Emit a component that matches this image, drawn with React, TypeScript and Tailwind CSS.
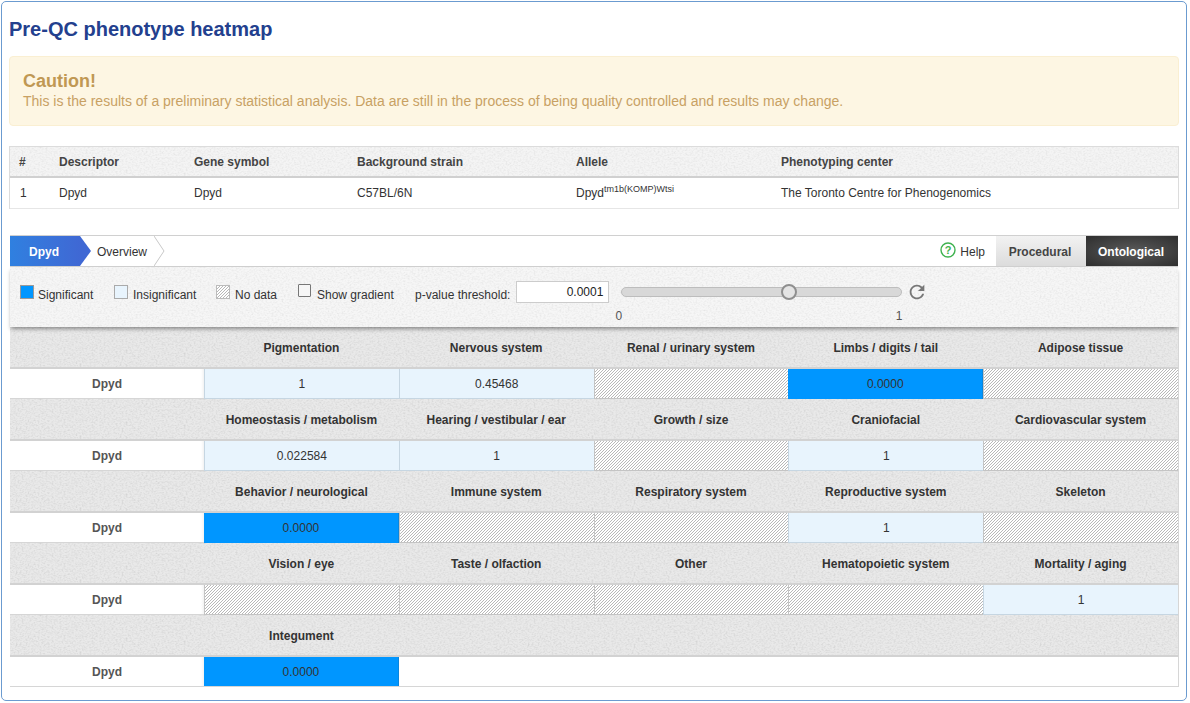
import React from "react";
import { MdRefresh } from "react-icons/md";

const Noise = ({ id, strength = 0.04 }: { id: string; strength?: number }) => (
  <svg className="absolute inset-0 w-full h-full pointer-events-none" aria-hidden="true">
    <filter id={id} x="0" y="0" width="100%" height="100%">
      <feTurbulence type="fractalNoise" baseFrequency="0.5 0.65" numOctaves={2} seed={4} />
      <feColorMatrix type="matrix" values={`0 0 0 0 0  0 0 0 0 0  0 0 0 0 0  ${strength * 3} ${strength * 3} 0 0 ${-strength * 2.6}`} />
    </filter>
    <rect width="100%" height="100%" filter={`url(#${id})`} />
  </svg>
);

const Hatch = ({ id }: { id: string }) => (
  <svg className="absolute inset-0 w-full h-full" aria-hidden="true" shapeRendering="crispEdges">
    <pattern id={id} width="3" height="3" patternUnits="userSpaceOnUse">
      <rect width="3" height="3" fill="#ffffff" />
      <rect x="2" y="0" width="1" height="1" fill="#b8b8b8" />
      <rect x="1" y="1" width="1" height="1" fill="#b8b8b8" />
      <rect x="0" y="2" width="1" height="1" fill="#b8b8b8" />
    </pattern>
    <rect width="100%" height="100%" fill={`url(#${id})`} />
  </svg>
);

type Cell = { n: string; v: string | null };
const rows: Cell[][] = [
  [
    { n: "Pigmentation", v: "1" },
    { n: "Nervous system", v: "0.45468" },
    { n: "Renal / urinary system", v: null },
    { n: "Limbs / digits / tail", v: "0.0000" },
    { n: "Adipose tissue", v: null },
  ],
  [
    { n: "Homeostasis / metabolism", v: "0.022584" },
    { n: "Hearing / vestibular / ear", v: "1" },
    { n: "Growth / size", v: null },
    { n: "Craniofacial", v: "1" },
    { n: "Cardiovascular system", v: null },
  ],
  [
    { n: "Behavior / neurological", v: "0.0000" },
    { n: "Immune system", v: null },
    { n: "Respiratory system", v: null },
    { n: "Reproductive system", v: "1" },
    { n: "Skeleton", v: null },
  ],
  [
    { n: "Vision / eye", v: null },
    { n: "Taste / olfaction", v: null },
    { n: "Other", v: null },
    { n: "Hematopoietic system", v: null },
    { n: "Mortality / aging", v: "1" },
  ],
  [{ n: "Integument", v: "0.0000" }],
];

function ValueCell({ v, id }: { v: string | null; id: string }) {
  if (v === null) {
    return (
      <div className="relative h-full border-l border-b border-[#c4c4c4]">
        <Hatch id={id} />
      </div>
    );
  }
  if (v === "0.0000") {
    return (
      <div className="h-full flex items-center justify-center bg-[#0096ff] text-[#333] border-r border-[#0b86dc]">
        {v}
      </div>
    );
  }
  return (
    <div className="h-full flex items-center justify-center bg-[#e8f4fd] text-[#333] border-l border-b border-[#c6d6e2]">
      {v}
    </div>
  );
}

function HeatBlock({ cells, idx }: { cells: Cell[]; idx: number }) {
  return (
    <div>
      <div className="relative h-[42px] bg-[#e9e9e9] border-b-2 border-[#d2d2d2]">
        <Noise id={`hn${idx}`} />
        <div className="relative grid grid-cols-[194px_repeat(5,1fr)] h-full font-bold text-[#333]">
          <div />
          {cells.map((c) => (
            <div key={c.n} className="flex items-center justify-center pt-px">
              {c.n}
            </div>
          ))}
        </div>
      </div>
      <div className="grid grid-cols-[194px_repeat(5,1fr)] h-[30px]">
        <div className="flex items-center justify-center font-bold text-[#555] bg-white border-b border-[#d6d6d6] shadow-[inset_-3px_0_3px_-2px_rgba(0,0,0,0.07)]">
          Dpyd
        </div>
        {cells.map((c, j) => (
          <ValueCell key={c.n} v={c.v} id={`h${idx}-${j}`} />
        ))}
      </div>
    </div>
  );
}

export default function App() {
  return (
    <div
      className="w-[1190px] h-[703px] bg-white pt-px pl-px text-[12px] text-[#333] overflow-hidden"
      style={{ fontFamily: '"Liberation Sans", Arial, sans-serif' }}
    >
      <div className="w-[1186px] h-[700px] border border-[#6b9bd0] rounded-[5px] pl-[7px] pr-[7px]">
        <h1 className="h-[54px] pt-[15px] text-[20px] leading-[24px] font-bold text-[#23408e]">
          Pre-QC phenotype heatmap
        </h1>
        <div className="h-[70px] bg-[#fdf6e3] border border-[#faefd2] rounded-[4px] pl-[13px] pt-[14px] text-[#c09853]">
          <div className="text-[18px] leading-[21px] font-bold">Caution!</div>
          <div className="text-[14px] leading-[18px] text-[#c8a163]">
            This is the results of a preliminary statistical analysis. Data are still in the process of being quality controlled and results may change.
          </div>
        </div>

        <div className="mt-[20px] border border-[#dcdcdc] border-b-0">
          <div className="relative h-[31px] bg-[#f4f4f4] border-b-2 border-[#d0d0d0]">
            <Noise id="tn" strength={0.03} />
            <div className="relative flex items-center h-full font-bold text-[#444] pt-px">
              <div className="w-[49px] pl-[9px]">#</div>
              <div className="w-[135px]">Descriptor</div>
              <div className="w-[163px]">Gene symbol</div>
              <div className="w-[219px]">Background strain</div>
              <div className="w-[205px]">Allele</div>
              <div>Phenotyping center</div>
            </div>
          </div>
          <div className="flex items-center h-[31px] border-b border-[#e6e6e6] text-[#333]">
            <div className="w-[49px] pl-[10px]">1</div>
            <div className="w-[135px]">Dpyd</div>
            <div className="w-[163px]">Dpyd</div>
            <div className="w-[219px]">C57BL/6N</div>
            <div className="w-[205px]">
              Dpyd<sup className="text-[9px] leading-none -top-[5.5px]">tm1b(KOMP)Wtsi</sup>
            </div>
            <div>The Toronto Centre for Phenogenomics</div>
          </div>
        </div>

        <div className="h-[26px]" />

        <div className="mx-px border border-[#d0d0d0] border-l-0 border-r-0 flex h-[32px] items-stretch bg-white">
          <div className="relative w-[81px] flex items-center font-bold text-white">
            <div className="h-full w-[70px] bg-gradient-to-r from-[#2f80e0] to-[#3f68d4] flex items-center pl-[19px] pt-px">
              Dpyd
            </div>
            <svg className="h-full w-[11px]" viewBox="0 0 11 30" preserveAspectRatio="none">
              <polygon points="0,0 11,15 0,30" fill="#3f68d4" />
            </svg>
          </div>
          <div className="relative w-[74px] flex items-center pl-[6px] pt-px text-[#333]">
            Overview
            <svg className="absolute right-0 top-0 h-full w-[11px]" viewBox="0 0 11 30" preserveAspectRatio="none">
              <polyline points="0,0 10,15 0,30" fill="none" stroke="#c8c8c8" />
            </svg>
          </div>
          <div className="flex-1" />
          <div className="flex items-center pr-[11px] gap-[4px] text-[#333] pt-px">
            <svg width="16" height="16" viewBox="0 0 16 16" className="mb-[3px]">
              <circle cx="8" cy="8" r="7" fill="none" stroke="#3fb24f" strokeWidth="1.4" />
              <text x="8" y="12" textAnchor="middle" fontSize="11" fontWeight="700" fill="#3fb24f" fontFamily="Liberation Sans">?</text>
            </svg>
            <span>Help</span>
          </div>
          <div className="w-[90px] flex items-center justify-center pr-[2px] pt-px font-bold text-[#444] bg-gradient-to-b from-[#f2f2f2] to-[#dcdcdc]">
            Procedural
          </div>
          <div className="w-[92px] flex items-center justify-center pr-[2px] pt-px font-bold text-white bg-[radial-gradient(ellipse_at_center,#5a5a5a,#2e2e2e)]">
            Ontological
          </div>
        </div>

        <div className="relative mx-px h-[60px] bg-[#f6f6f6] shadow-[0_3px_4px_-1px_rgba(0,0,0,0.4)] z-10">
          <Noise id="fn" strength={0.03} />
          <div className="relative flex items-start h-full pl-[10px] pt-[15px] text-[#333]">
            <div className="flex w-[94px] pt-[3px]">
              <span className="block w-[14px] h-[14px] bg-[#0096ff] border border-[#999] mr-[4px]" />
              <span className="mt-[1px]">Significant</span>
            </div>
            <div className="flex w-[102px] pt-[3px]">
              <span className="block w-[14px] h-[14px] bg-[#e8f4fd] border border-[#aaa] mr-[5px]" />
              <span className="mt-[1px]">Insignificant</span>
            </div>
            <div className="flex w-[82px] pt-[3px]">
              <span className="relative block w-[14px] h-[14px] border border-[#bbb] mr-[5px]">
                <Hatch id="hlegend" />
              </span>
              <span className="mt-[1px]">No data</span>
            </div>
            <div className="flex w-[117px] pt-[3px]">
              <span className="block w-[13px] h-[13px] bg-[#f6f6f6] border border-[#777] rounded-[1px] mr-[6px] -mt-px" />
              <span className="mt-[1px]">Show gradient</span>
            </div>
            <span className="mt-[4px] mr-[6px]">p-value threshold:</span>
            <div className="w-[93px] h-[22px] -mt-px bg-white border border-[#ccc] flex items-center justify-end pr-[5px] text-[12px] text-[#222]">
              0.0001
            </div>
            <div className="ml-[12px] w-[281px] mt-[5px]">
              <div className="relative h-[10px] bg-[#d8d8d8] border border-[#bdbdbd] rounded-full">
                <span className="absolute left-[159px] -top-[4px] w-[16px] h-[16px] rounded-full bg-[#e4e4e4] border-[2px] border-[#8f8f8f]" />
              </div>
              <div className="flex justify-between mt-[10px] text-[#555]">
                <span className="-ml-[6px]">0</span>
                <span>1</span>
              </div>
            </div>
            <MdRefresh className="ml-[4px] -mt-px text-[#777]" size={22} />
          </div>
        </div>

        <div className="mx-px shadow-[1px_0_0_#d6d6d6]">
          {rows.map((cells, i) => (
            <HeatBlock key={i} cells={cells} idx={i} />
          ))}
        </div>
        <div className="mx-px h-px bg-[#d6d6d6] -mt-px relative" />
      </div>
    </div>
  );
}
